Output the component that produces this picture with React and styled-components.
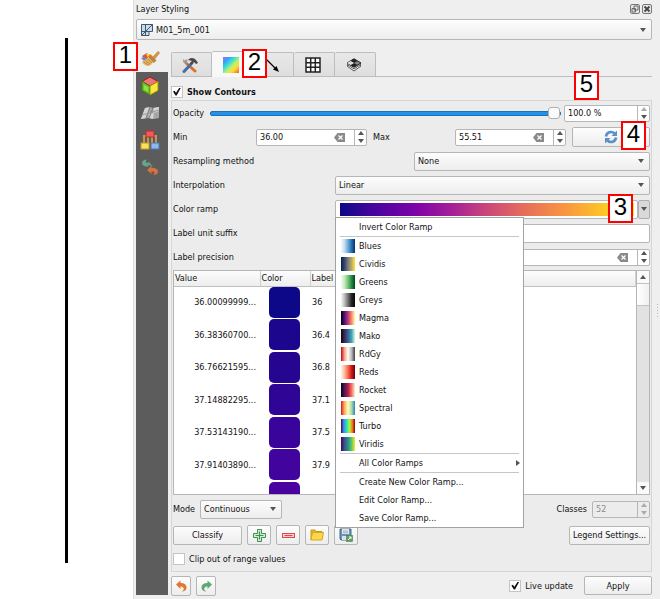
import React, { useState } from 'react';
import styled, { createGlobalStyle, css } from 'styled-components';

const GlobalStyle = createGlobalStyle`
  * {
    box-sizing: border-box;
  }
  body {
    margin: 0;
    background: #fff;
  }
  body, button, input, select {
    font-family: "DejaVu Sans Condensed", "DejaVu Sans", sans-serif;
    font-size: 9px;
    line-height: 12px;
    color: #111;
  }
  svg {
    display: block;
    flex: none;
  }
`;

// Page
const Page = styled.div`
  display: grid;
  grid-template-columns: 133px 1fr;
  min-height: 100vh;
`;

const Canvas = styled.div`
  display: flex;
  justify-content: center;
  padding: 38px 0 36px;
`;

const MapEdge = styled.div`
  width: 3px;
  background: #000;
`;

const Dock = styled.section`
  display: flex;
  flex-direction: column;
  height: 100vh;
  min-width: 0;
  padding: 0 8px 0 2px;
  border-left: 1px solid #dcdcdc;
  background: #efefef;
  position: relative;
`;

const DockGrip = styled.div`
  position: absolute;
  right: 1px;
  top: 303px;
  width: 3px;
  height: 15px;
  background: radial-gradient(circle, #bbb 1px, transparent 1px) 0 0 / 3px 3px;
`;

// Title bar
const TitleBar = styled.header`
  display: flex;
  align-items: center;
  justify-content: space-between;
  height: 19px;
  padding-bottom: 2px;
`;

const Title = styled.h1`
  margin: 0;
  font-size: 9px;
  font-weight: 400;
`;

const TitleButtons = styled.div`
  display: flex;
  gap: 2px;
`;

const TitleButton = styled.button`
  width: 10px;
  height: 10px;
  padding: 0;
  border: 1px solid #777;
  border-radius: 2px;
  background: #e8e8e8;
`;

// Shared look of every box
const frame = css`
  border: 1px solid #b6b6b6;
  border-radius: 2px;
`;

const raised = css`
  ${frame}
  background: linear-gradient(#fdfdfd, #ededed);
`;

const SelectBox = styled.div`
  ${raised}
  display: grid;
  grid-template-columns: auto 1fr 14px;
  align-items: center;
  height: ${(p) => (p.$tall ? '21px' : '19px')};
  width: ${(p) => p.$width || 'auto'};
`;

const SelectIcon = styled.span`
  grid-area: 1 / 1;
  padding-left: 4px;
`;

const Select = styled.select`
  grid-area: 1 / ${(p) => (p.$afterIcon ? 2 : 1)} / 2 / 4;
  width: 100%;
  height: 100%;
  padding: 0 14px 0 3px;
  border: 0;
  background: transparent;
  appearance: none;
  outline: none;
`;

const Arrow = styled.span`
  grid-area: 1 / 3;
  width: 0;
  border: 3px solid transparent;
  border-top: 4px solid #555;
  border-bottom: 0;
  margin-left: 3px;
  pointer-events: none;
`;

const FieldBox = styled.div`
  ${frame}
  display: flex;
  align-items: center;
  height: 17px;
  width: ${(p) => p.$width || 'auto'};
  background: ${(p) => (p.$disabled ? '#ececec' : '#fff')};
`;

const FieldInput = styled.input`
  flex: 1;
  min-width: 0;
  width: 100%;
  height: 100%;
  padding: 0 3px;
  border: 0;
  background: transparent;
  outline: none;
  &:disabled {
    color: #8c8c8c;
  }
`;

const TextInput = styled.input`
  ${frame}
  width: 100%;
  height: 19px;
  background: #fff;
`;

const ClearButton = styled.button`
  padding: 0;
  margin-right: 9px;
  border: 0;
  background: none;
`;

const Steps = styled.div`
  display: flex;
  flex-direction: column;
  width: 12px;
  height: 100%;
  border-left: 1px solid #b6b6b6;
`;

const Step = styled.button`
  flex: 1;
  display: flex;
  justify-content: center;
  align-items: center;
  padding: 0;
  border: 0;
  background: none;
  &::before {
    content: '';
    border: 3px solid transparent;
    border-${(p) => (p.$up ? 'bottom' : 'top')}: 4px solid ${(p) => (p.$dim ? '#aaa' : '#555')};
    border-${(p) => (p.$up ? 'top' : 'bottom')}: 0;
  }
`;

const Button = styled.button`
  ${raised}
  position: relative;
  display: flex;
  align-items: center;
  justify-content: center;
  width: ${(p) => p.$width || '100%'};
  height: ${(p) => (p.$tall ? '20px' : '19px')};
  padding: 0;
  white-space: nowrap;
`;

const IconButton = styled(Button)`
  width: ${(p) => (p.$small ? '20px' : '24px')};
  height: 20px;
`;

const CheckLabel = styled.label`
  display: flex;
  align-items: center;
  gap: 4px;
  padding-right: 6px;
  font-weight: ${(p) => (p.$bold ? 700 : 400)};
`;

const CheckBox = styled.input`
  appearance: none;
  display: grid;
  place-items: center;
  width: 12px;
  height: 12px;
  margin: 0;
  border: 1px solid #c4c4c4;
  background: #fff;
  &:checked::before {
    content: '';
    width: 8px;
    height: 8px;
    background: #111;
    clip-path: polygon(0 50%, 18% 40%, 38% 66%, 80% 0, 100% 0, 46% 100%, 32% 100%);
  }
`;

// Body: side strip + settings
const Body = styled.div`
  flex: 1;
  display: flex;
  gap: 3px;
  min-height: 0;
  padding-top: 5px;
`;

const SideBar = styled.nav`
  display: flex;
  flex-direction: column;
  width: 32px;
  margin-bottom: 4px;
  background: #5c5c5c;
`;

const SideTab = styled.button`
  position: relative;
  display: grid;
  place-items: center;
  height: 27px;
  padding: 0 5px 0 0;
  border: 0;
  background: ${(p) => (p.$active ? '#efefef' : 'transparent')};
`;

const Settings = styled.main`
  flex: 1;
  display: flex;
  flex-direction: column;
  min-width: 0;
  padding-top: 6px;
`;

const TabBar = styled.div`
  display: flex;
  align-items: flex-end;
  height: 26px;
  border-bottom: 1px solid #bdbdbd;
`;

const Tab = styled.button`
  position: relative;
  display: grid;
  place-items: center;
  width: 41px;
  height: ${(p) => (p.$active ? '26px' : '24px')};
  margin-bottom: ${(p) => (p.$active ? '-1px' : '0')};
  padding: 0 3px 0 0;
  border: 1px solid #bdbdbd;
  border-bottom: 0;
  border-left-width: ${(p) => (p.$first ? '1px' : '0')};
  border-radius: 2px 2px 0 0;
  background: ${(p) => (p.$active ? '#f8f8f8' : 'linear-gradient(#e8e8e8, #dedede)')};
`;

const GroupTitle = styled.div`
  display: flex;
  align-items: center;
  height: 23px;
  padding-top: 6px;
`;

const Group = styled.div`
  flex: 1;
  display: flex;
  flex-direction: column;
  min-height: 0;
  padding: 0 1px;
  border: 1px solid #d6d6d6;
  background: #ececec;
`;

const Row = styled.div`
  display: grid;
  grid-template-columns: ${(p) => p.$columns};
  column-gap: ${(p) => p.$gap || '0'};
  align-items: center;
  height: 24px;
`;

const Slider = styled.input`
  appearance: none;
  width: 100%;
  height: 12px;
  margin: 0;
  background: transparent;
  &::-webkit-slider-runnable-track {
    height: 5px;
    border: 1px solid #1b72b8;
    border-radius: 2px;
    background: #2491e6;
  }
  &::-webkit-slider-thumb {
    appearance: none;
    width: 12px;
    height: 12px;
    margin-top: -5px;
    border: 1px solid #b0b0b0;
    border-radius: 3px;
    background: #fafafa;
  }
`;

const OpacityCell = styled.div`
  position: relative;
`;

// Ramp and its menu
const RampCell = styled.div`
  position: relative;
  display: flex;
  height: 19px;
`;

const RampButton = styled.button`
  ${frame}
  flex: 1;
  padding: 2px 3px 2px 4px;
  background: #fff;
`;

const RampFill = styled.span`
  display: block;
  height: 100%;
  background: linear-gradient(90deg, #0d0887, #41049d 10%, #7e03a8 26%, #a82296 39%, #cb4679 50%, #e56b5d 62%, #f89441 76%, #fdc328 89%, #f0f921);
`;

const RampArrow = styled.button`
  display: grid;
  place-items: center;
  width: 12px;
  padding: 0;
  border: 1px solid #b0b0b0;
  border-radius: 2px;
  background: #d9d9d9;
  &::before {
    content: '';
    border: 3px solid transparent;
    border-top: 4px solid #555;
    border-bottom: 0;
  }
`;

const Menu = styled.div`
  position: absolute;
  z-index: 2;
  left: 0;
  top: 100%;
  width: 189px;
  margin-top: -2px;
  border: 1px solid #a2a2a2;
  background: #fff;
`;

const MenuItem = styled.button`
  display: grid;
  grid-template-columns: 14px 1fr auto;
  column-gap: 4px;
  align-items: center;
  width: 100%;
  height: 18px;
  padding: 0 3px 0 5px;
  border: 0;
  background: none;
  text-align: left;
`;

const RampIcon = styled.span`
  height: 14px;
  background: ${(p) => (p.$colors ? `linear-gradient(90deg, ${p.$colors})` : 'none')};
`;

const SubArrow = styled.span`
  border: 3px solid transparent;
  border-left: 4px solid #555;
  border-right: 0;
`;

const Separator = styled.hr`
  height: 1px;
  margin: 0 4px;
  border: 0;
  background: #c6c6c6;
`;

// Class table
const TableView = styled.div`
  flex: 1;
  display: flex;
  min-height: 0;
  margin-top: 1px;
  border: 1px solid #b6b6b6;
  background: #fff;
`;

const TableScroll = styled.div`
  flex: 1;
  overflow: hidden;
`;

const Table = styled.table`
  width: 100%;
  table-layout: fixed;
  border-collapse: collapse;
`;

const HeadCell = styled.th`
  width: ${(p) => p.$width || 'auto'};
  height: 15px;
  padding: 0 1px;
  border-bottom: 1px solid #c0c0c0;
  border-right: 1px solid #d0d0d0;
  background: linear-gradient(#fcfcfc, #ededed);
  font-weight: 400;
  text-align: left;
`;

const ClassRow = styled.tr`
  height: 32px;
  &:nth-child(even) {
    height: 33px;
  }
`;

const Cell = styled.td`
  padding: 0 ${(p) => (p.$align ? '4px' : '2px')};
  text-align: ${(p) => p.$align || 'left'};
`;

const Swatch = styled.button`
  display: block;
  width: 31px;
  height: 31px;
  margin-left: 7px;
  border: 0;
  border-radius: 5px;
  background: ${(p) => p.$color};
`;

const ScrollBar = styled.div`
  display: flex;
  flex-direction: column;
  width: 13px;
  border-left: 1px solid #b6b6b6;
  background: #e2e2e2;
`;

const ScrollStep = styled(Step)`
  flex: none;
  height: 12px;
  background: #fafafa;
`;

const ScrollThumb = styled.div`
  height: 23px;
  margin-bottom: auto;
  border: 1px solid #c2c2c2;
  border-width: 1px 0;
  background: linear-gradient(90deg, #fff, #f0f0f0);
`;

// Bars under the table
const Bar = styled.div`
  display: flex;
  align-items: center;
  gap: 5px;
  height: ${(p) => p.$height || '24px'};
`;

const Spacer = styled.span`
  flex: 1;
`;

// Numbered callouts
const Callout = styled.span`
  position: absolute;
  z-index: 3;
  top: ${(p) => p.$top};
  left: ${(p) => p.$left || 'auto'};
  right: ${(p) => p.$right || 'auto'};
  width: 25px;
  height: 29px;
  border: 2px solid #f00;
  background: #fff;
  color: #000;
  font: 400 24px/22px "Liberation Sans", Arial, sans-serif;
  text-align: center;
`;

// Icons
const LayerIcon = () => (
  <svg width="12" height="12" viewBox="0 0 12 12">
    <path d="M.5 .5h11v7H8v4H.5z" fill="#c9dcec" stroke="#41576b" />
    <path d="M4.500 .5v11M.5 7.500h8M4.500 7.500L11.500 .5M.5 11.500L4.500 7.500" stroke="#41576b" fill="none" />
  </svg>
);

const BrushIcon = () => (
  <svg width="20" height="18" viewBox="0 0 20 18">
    <path d="M2 6l5-3 3 4-5 3z" fill="#ee4a3e" />
    <path d="M1 8l4-1 5 5-4 1z" fill="#4f8fe0" />
    <path d="M6 4l5 0 3 4-4 4z" fill="#f8d030" />
    <path d="M2 12l7-5 5 5-5 4c-3 0-5-1-7-4z" fill="#e8b765" />
    <path d="M3.500 12l5 3M5.500 10.500l5 4M7.500 9l4.500 4" stroke="#b4752c" strokeWidth=".8" />
    <path d="M8.500 6.500l2-1.500 5.500 5.500-2 2z" fill="#c58445" stroke="#8a5422" strokeWidth=".5" />
    <path d="M12.500 7.500L18 1.500l1.500 1.300-5 6.500z" fill="#dc9a48" stroke="#a8692a" strokeWidth=".6" />
  </svg>
);

const CubeIcon = () => (
  <svg width="18" height="20" viewBox="0 0 18 20">
    <path d="M9 1l8 4.500L9 10 1 5.500z" fill="#f0747a" stroke="#b3161c" />
    <path d="M1 5.500L9 10v9l-8-4.500z" fill="#6cc52a" stroke="#3f7d10" />
    <path d="M17 5.500L9 10v9l8-4.500z" fill="#f6ea3e" stroke="#a3930c" />
    <path d="M3 9l4 2.300v4.500L3 13.500z" fill="#8fe04a" />
  </svg>
);

const TerrainIcon = () => (
  <svg width="20" height="14" viewBox="0 0 20 14">
    <path d="M5 2l5-1 3 1 6-1v11l-6 1-4-1-8 1z" fill="#a9a9a9" />
    <path d="M5 2l5-1-4 11-5 1zM13 2l6-1v4l-5 2zM9 8l5-1-1 6-4-1z" fill="#d4d4d4" />
    <path d="M10 1L6 12M13 2L9 12" stroke="#777" fill="none" />
    <path d="M2 9l7-2 10-3M14 7l5 4" stroke="#999" fill="none" />
  </svg>
);

const TreeIcon = () => (
  <svg width="20" height="20" viewBox="0 0 20 20">
    <path d="M7 6H4v9M13 6h3v9M8 7v7M12 7v7" stroke="#c8964a" strokeWidth="2" fill="none" />
    <rect x="6" y="1" width="8" height="6" fill="#ef5b5b" stroke="#b83030" />
    <rect x="1" y="13" width="8" height="6" fill="#f8e05a" stroke="#c49a28" />
    <rect x="11" y="13" width="8" height="6" fill="#8cb8ec" stroke="#5078ae" />
  </svg>
);

const HistoryIcon = () => (
  <svg width="18" height="18" viewBox="0 0 18 18">
    <path d="M12 9L7.500 6V8C3 8.500 1 6.500 1 4.500 1 2.500 3 1 6 1 4.800 2 4.500 3 5 3.800c.5.700 1.500.700 2.500.700V2.500z" fill="#6ba585" transform="translate(0 .5)" />
    <path d="M6 12l4.500-4v2c4-.5 6.500 1 6.500 3.500 0 2-2 3.500-5 3.500 1.500-1 1.800-2 1.300-2.800-.5-.700-1.500-.700-2.800-.700V16z" fill="#d9733d" />
  </svg>
);

const ToolsIcon = () => (
  <svg width="18" height="16" viewBox="0 0 18 16">
    <path d="M5 6L14 14" stroke="#e06e24" strokeWidth="3" strokeLinecap="round" />
    <path d="M2 5c0-1 .5-1.500 0-3l2 1.500L6 2c1 2 0 4-1 5z" fill="#999" />
    <path d="M3 14.500L11 6" stroke="#3f6fa5" strokeWidth="3" strokeLinecap="round" />
    <path d="M7 3c3-3 6-2 8 0l2 3-2 1-2-2-3 3-1-2 2-2z" fill="#4a4a4a" />
  </svg>
);

const RasterIcon = () => (
  <svg width="16" height="16" viewBox="0 0 16 16">
    <defs>
      <linearGradient id="raster" x1="0" y1="0" x2="1" y2="1">
        <stop offset="0" stopColor="#a06cf0" />
        <stop offset=".2" stopColor="#3aa0f5" />
        <stop offset=".4" stopColor="#3ce0d8" />
        <stop offset=".58" stopColor="#c8f060" />
        <stop offset=".75" stopColor="#fbd93c" />
        <stop offset="1" stopColor="#f4582c" />
      </linearGradient>
    </defs>
    <rect width="16" height="16" fill="url(#raster)" />
  </svg>
);

const VectorIcon = () => (
  <svg width="16" height="16" viewBox="0 0 16 16">
    <path d="M1 1l11 11" stroke="#000" strokeWidth="1.200" />
    <path d="M15 15l-6-2.500 3.500-3.500z" />
  </svg>
);

const GridIcon = () => (
  <svg width="16" height="16" viewBox="0 0 16 16">
    <path d="M1 1h14v14H1zM5.700 1v14M10.300 1v14M1 5.700h14M1 10.300h14" fill="#fff" stroke="#222" strokeWidth="1.500" />
  </svg>
);

const StackIcon = () => (
  <svg width="16" height="14" viewBox="0 0 16 14">
    <path d="M8 3.500l7 4.500-7 5-7-5z" fill="#fff" stroke="#555" />
    <path d="M8 2l7 4.300L8 11 1 6.300z" fill="#ddd" stroke="#555" />
    <path d="M8 .8l7 4.200-7 4.200L1 5z" fill="#888" stroke="#222" />
    <path d="M8 .8l3.500 2.100L8 5 4.500 2.900zM8 5l3.500 2L8 9.200 4.500 7z" fill="#222" />
    <path d="M4.500 3L8 5 4.500 7 1 5z" fill="#ddd" />
  </svg>
);

const BackspaceIcon = () => (
  <svg width="11" height="9" viewBox="0 0 11 9">
    <path d="M0 4.500L3.500 0H11v9H3.500z" fill="#8a8a8a" />
    <path d="M4.500 2.500l4 4M8.500 2.500l-4 4" stroke="#fff" strokeWidth="1.200" />
  </svg>
);

const RefreshIcon = () => (
  <svg width="14" height="14" viewBox="0 0 14 14">
    <path d="M2 6.500a5 5 0 0 1 8.500-3M12 7.500a5 5 0 0 1-8.500 3" fill="none" stroke="#5b8fc8" strokeWidth="2.600" />
    <path d="M13 .5v5.500H7.500zM1 13.500V8h5.500z" fill="#5b8fc8" />
  </svg>
);

const PlusIcon = () => (
  <svg width="13" height="13" viewBox="0 0 13 13">
    <path d="M4.500 .5h4v4h4v4h-4v4h-4v-4h-4v-4h4z" fill="#d6efdb" stroke="#3f8f52" />
    <path d="M6.500 2.500v8M2.500 6.500h8" stroke="#3f8f52" strokeWidth="1.200" />
  </svg>
);

const MinusIcon = () => (
  <svg width="13" height="5" viewBox="0 0 13 5">
    <rect x=".5" y=".5" width="12" height="4" fill="#fbd5d5" stroke="#e04848" />
    <path d="M2.500 2.500h8" stroke="#e04848" />
  </svg>
);

const FolderIcon = () => (
  <svg width="14" height="12" viewBox="0 0 14 12">
    <path d="M1 11V1h4l1 1.500h6V4" fill="#e6b822" stroke="#c9981a" />
    <path d="M1 11l1.500-7.500h11L12 11z" fill="#fbd84a" stroke="#d6a722" />
  </svg>
);

const SaveIcon = () => (
  <svg width="14" height="14" viewBox="0 0 14 14">
    <path d="M1 1h11v11H2l-1-1z" fill="#6d93b8" stroke="#47698c" />
    <rect x="3" y="1" width="7" height="5" fill="#e3e8ee" />
    <path d="M4 3h5M4 4.700h5" stroke="#8a98a8" strokeWidth=".7" />
    <rect x="3" y="8" width="5" height="4" fill="#dbe2ea" />
    <rect x="7.500" y="7.500" width="6" height="6" fill="#5fa463" stroke="#3f8046" strokeWidth=".6" />
    <path d="M9 12l3-3M10 9h2v2" stroke="#fff" fill="none" />
  </svg>
);

const UndoIcon = ({ color, flip }) => (
  <svg width="11" height="12" viewBox="0 0 11 12">
    <path
      d="M0 4.500L4.500 .5V3c4 0 6 1.500 6 4.500 0 2.500-2 4-5 4 2-1 2.500-2 2.200-3C7.300 7 6 6.500 4.500 6.500V9z"
      fill={color}
      transform={flip ? 'matrix(-1 0 0 1 11 0)' : undefined}
    />
  </svg>
);

const FloatIcon = () => (
  <svg width="8" height="8" viewBox="0 0 8 8">
    <path d="M3 1h4v4H3zM1 3.500h3.500V7H1z" fill="none" stroke="#666" />
  </svg>
);

const CloseIcon = () => (
  <svg width="8" height="8" viewBox="0 0 8 8">
    <path d="M1.500 1.500l5 5M6.500 1.500l-5 5" stroke="#444" strokeWidth="1.800" />
  </svg>
);

const ramps = [
  { name: 'Blues', colors: '#f7fbff, #c6dbef, #6baed6, #2171b5, #08306b' },
  { name: 'Cividis', colors: '#00224e, #35456c, #7d7c78, #b8a96a, #fde737' },
  { name: 'Greens', colors: '#f7fcf5, #c7e9c0, #74c476, #238b45, #00441b' },
  { name: 'Greys', colors: '#fafafa, #bdbdbd, #737373, #252525, #050505' },
  { name: 'Magma', colors: '#000004, #51127c, #b73779, #fc8961, #fcfdbf' },
  { name: 'Mako', colors: '#0b0405, #382a54, #395d9c, #3ba8ad, #def5e5' },
  { name: 'RdGy', colors: '#ca0020, #f4a582, #ffffff, #bababa, #404040' },
  { name: 'Reds', colors: '#fff5f0, #fcbba1, #fb6a4a, #cb181d, #67000d' },
  { name: 'Rocket', colors: '#03051a, #4c1d4b, #b91657, #f4704f, #faebdd' },
  { name: 'Spectral', colors: '#d7191c, #fdae61, #ffffbf, #abdda4, #2b83ba' },
  { name: 'Turbo', colors: '#30123b, #4686fb, #1be5b5, #a4fc3c, #fb7e21, #7a0403' },
  { name: 'Viridis', colors: '#440154, #3b528b, #21918c, #5ec962, #fde725' },
];

const classes = [
  { value: '36.00099999...', color: '#0d0887', label: '36' },
  { value: '36.38360700...', color: '#1b068d', label: '36.4' },
  { value: '36.76621595...', color: '#260591', label: '36.8' },
  { value: '37.14882295...', color: '#2f0596', label: '37.1' },
  { value: '37.53143190...', color: '#38049a', label: '37.5' },
  { value: '37.91403890...', color: '#41049d', label: '37.9' },
  { value: '', color: '#4903a0', label: '' },
];

const sideTabs = [
  { name: 'Symbology', icon: <BrushIcon /> },
  { name: '3D View', icon: <CubeIcon /> },
  { name: 'Terrain', icon: <TerrainIcon /> },
  { name: 'Rendering', icon: <TreeIcon /> },
  { name: 'History', icon: <HistoryIcon /> },
];

const tabs = [
  { name: 'Settings', icon: <ToolsIcon /> },
  { name: 'Contours', icon: <RasterIcon /> },
  { name: 'Vectors', icon: <VectorIcon /> },
  { name: 'Mesh', icon: <GridIcon /> },
  { name: 'Averaging', icon: <StackIcon /> },
];

const SelectField = ({ id, label, options, icon, tall, width }) => (
  <SelectBox $tall={tall} $width={width}>
    {icon && <SelectIcon>{icon}</SelectIcon>}
    <Select id={id} aria-label={label} $afterIcon={!!icon}>
      {options.map((o) => (
        <option key={o}>{o}</option>
      ))}
    </Select>
    <Arrow />
  </SelectBox>
);

const SpinField = ({ id, label, value, clear, width, disabled, atMax }) => (
  <FieldBox $width={width} $disabled={disabled}>
    <FieldInput id={id} aria-label={label} defaultValue={value} disabled={disabled} />
    {clear && (
      <ClearButton aria-label="Clear">
        <BackspaceIcon />
      </ClearButton>
    )}
    <Steps>
      <Step $up $dim={disabled || atMax} aria-label="Increase" />
      <Step $dim={disabled} aria-label="Decrease" />
    </Steps>
  </FieldBox>
);

const App = () => {
  const [side, setSide] = useState(0);
  const [tab, setTab] = useState(1);
  const [menuOpen, setMenuOpen] = useState(true);

  return (
    <>
      <GlobalStyle />
      <Page>
        <Canvas>
          <MapEdge />
        </Canvas>

        <Dock>
          <TitleBar>
            <Title>Layer Styling</Title>
            <TitleButtons>
              <TitleButton aria-label="Float"><FloatIcon /></TitleButton>
              <TitleButton aria-label="Close"><CloseIcon /></TitleButton>
            </TitleButtons>
          </TitleBar>

          <SelectField label="Layer" options={['M01_5m_001']} icon={<LayerIcon />} tall />

          <Body>
            <SideBar>
              {sideTabs.map((t, i) => (
                <SideTab key={t.name} aria-label={t.name} $active={side === i} onClick={() => setSide(i)}>
                  {t.icon}
                  {i === 0 && <Callout $top="-3px" $left="-23px">1</Callout>}
                </SideTab>
              ))}
            </SideBar>

            <Settings>
              <TabBar>
                {tabs.map((t, i) => (
                  <Tab key={t.name} aria-label={t.name} $first={i === 0} $active={tab === i} onClick={() => setTab(i)}>
                    {t.icon}
                    {i === 1 && <Callout $top="-3px" $left="30px">2</Callout>}
                  </Tab>
                ))}
              </TabBar>

              <GroupTitle>
                <CheckLabel $bold>
                  <CheckBox type="checkbox" defaultChecked />
                  Show Contours
                </CheckLabel>
              </GroupTitle>

              <Group>
                <Row $columns="34px 1fr 86px" $gap="3px">
                  <label htmlFor="opacity">Opacity</label>
                  <Slider id="opacity" type="range" defaultValue="100" />
                  <OpacityCell>
                    <SpinField label="Opacity percent" value="100.0 %" atMax />
                    <Callout $top="-34px" $left="10px">5</Callout>
                  </OpacityCell>
                </Row>
                <Row $columns="77px 1fr 76px 1fr 78px" $gap="6px">
                  <label htmlFor="min">Min</label>
                  <SpinField id="min" value="36.00" clear />
                  <label htmlFor="max">Max</label>
                  <SpinField id="max" value="55.51" clear />
                  <Button $tall aria-label="Reload">
                    <RefreshIcon />
                    <Callout $top="-7px" $right="3px">4</Callout>
                  </Button>
                </Row>
                <Row $columns="241px 1fr">
                  <label htmlFor="resampling">Resampling method</label>
                  <SelectField id="resampling" options={['None']} />
                </Row>
                <Row $columns="162px 1fr">
                  <label htmlFor="interpolation">Interpolation</label>
                  <SelectField id="interpolation" options={['Linear', 'Discrete', 'Exact']} />
                </Row>
                <Row $columns="162px 1fr">
                  <label htmlFor="ramp">Color ramp</label>
                  <RampCell>
                    <RampButton id="ramp">
                      <RampFill />
                    </RampButton>
                    <RampArrow aria-label="Ramp menu" onClick={() => setMenuOpen(!menuOpen)} />
                    <Callout $top="-6px" $right="17px">3</Callout>
                    {menuOpen && (
                      <Menu role="menu">
                        <MenuItem role="menuitem"><RampIcon />Invert Color Ramp</MenuItem>
                        <Separator />
                        {ramps.map((r) => (
                          <MenuItem key={r.name} role="menuitem">
                            <RampIcon $colors={r.colors} />
                            {r.name}
                          </MenuItem>
                        ))}
                        <Separator />
                        <MenuItem role="menuitem"><RampIcon />All Color Ramps<SubArrow /></MenuItem>
                        <Separator />
                        <MenuItem role="menuitem"><RampIcon />Create New Color Ramp...</MenuItem>
                        <MenuItem role="menuitem"><RampIcon />Edit Color Ramp...</MenuItem>
                        <MenuItem role="menuitem"><RampIcon />Save Color Ramp...</MenuItem>
                      </Menu>
                    )}
                  </RampCell>
                </Row>
                <Row $columns="162px 1fr">
                  <label htmlFor="suffix">Label unit suffix</label>
                  <TextInput id="suffix" />
                </Row>
                <Row $columns="162px 1fr">
                  <label htmlFor="precision">Label precision</label>
                  <SpinField id="precision" value="" clear />
                </Row>

                <TableView>
                  <TableScroll>
                    <Table>
                      <thead>
                        <tr>
                          <HeadCell $width="86px">Value</HeadCell>
                          <HeadCell $width="50px">Color</HeadCell>
                          <HeadCell>Label</HeadCell>
                        </tr>
                      </thead>
                      <tbody>
                        {classes.map((c) => (
                          <ClassRow key={c.color}>
                            <Cell $align="right">{c.value}</Cell>
                            <Cell><Swatch $color={c.color} aria-label={c.color} /></Cell>
                            <Cell>{c.label}</Cell>
                          </ClassRow>
                        ))}
                      </tbody>
                    </Table>
                  </TableScroll>
                  <ScrollBar>
                    <ScrollStep $up aria-label="Scroll up" />
                    <ScrollThumb />
                    <ScrollStep aria-label="Scroll down" />
                  </ScrollBar>
                </TableView>

                <Bar $height="28px">
                  <label htmlFor="mode">Mode</label>
                  <SelectField id="mode" options={['Continuous', 'Equal Interval', 'Quantile']} width="82px" />
                  <Spacer />
                  <label htmlFor="classes">Classes</label>
                  <SpinField id="classes" value="52" width="58px" disabled />
                </Bar>
                <Bar>
                  <Button $width="69px">Classify</Button>
                  <IconButton aria-label="Add"><PlusIcon /></IconButton>
                  <IconButton aria-label="Remove"><MinusIcon /></IconButton>
                  <IconButton aria-label="Open"><FolderIcon /></IconButton>
                  <IconButton aria-label="Save"><SaveIcon /></IconButton>
                  <Spacer />
                  <Button $width="81px">Legend Settings...</Button>
                </Bar>
                <Bar>
                  <CheckLabel>
                    <CheckBox type="checkbox" />
                    Clip out of range values
                  </CheckLabel>
                </Bar>
              </Group>

              <Bar $height="27px">
                <IconButton $small aria-label="Undo"><UndoIcon color="#e0762f" /></IconButton>
                <IconButton $small aria-label="Redo"><UndoIcon color="#5fa777" flip /></IconButton>
                <Spacer />
                <CheckLabel>
                  <CheckBox type="checkbox" defaultChecked />
                  Live update
                </CheckLabel>
                <Button $width="68px">Apply</Button>
              </Bar>
            </Settings>
          </Body>
          <DockGrip />
        </Dock>
      </Page>
    </>
  );
};

export default App;
